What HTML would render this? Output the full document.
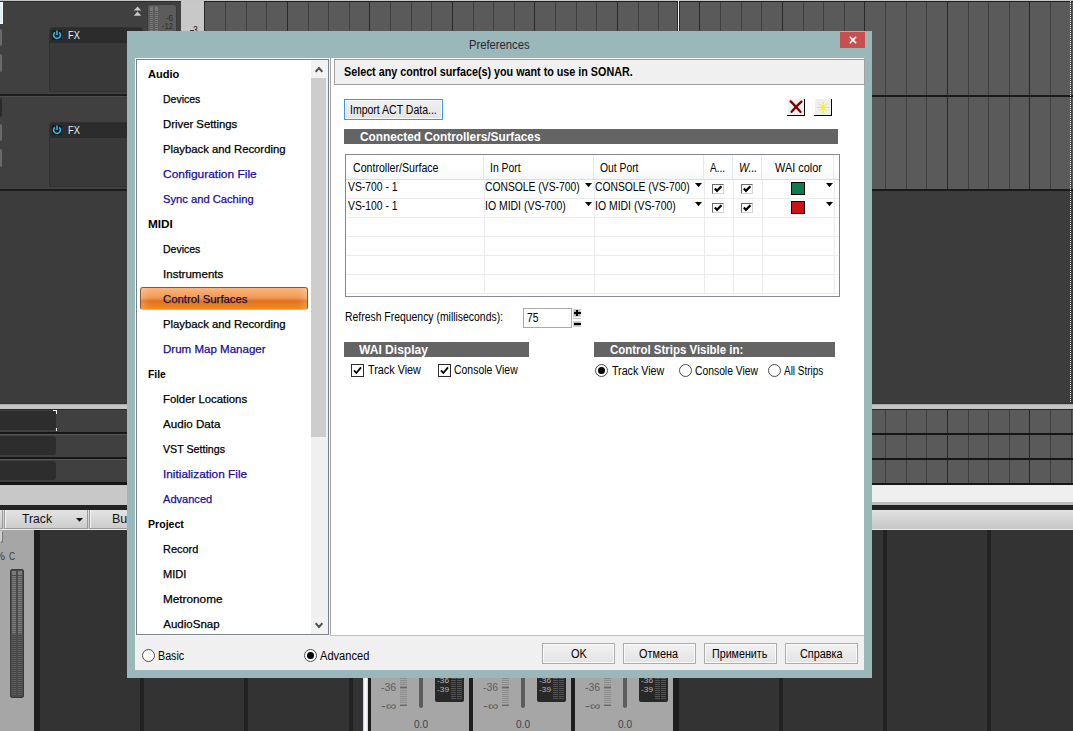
<!DOCTYPE html>
<html lang="en"><head><meta charset="utf-8"><title>Preferences</title>
<style>
html,body{margin:0;padding:0}
body{width:1073px;height:731px;overflow:hidden;background:#3c3c3c;position:relative;font-family:"Liberation Sans",sans-serif;font-size:12px;line-height:12px;color:#000}
.a{position:absolute}
.t{position:absolute;white-space:nowrap;transform-origin:0 0;display:block}

</style></head><body>
<div class="a" style="left:0px;top:0px;width:1073px;height:1px;background:#c6c6c6"></div>
<div class="a" style="left:0px;top:1px;width:181px;height:1px;background:#2c2c2c"></div>
<div class="a" style="left:204px;top:1px;width:869px;height:1px;background:#1e1e1e"></div>
<div class="a" style="left:0px;top:2px;width:181px;height:189px;background:#404040"></div>
<div class="a" style="left:0px;top:94px;width:181px;height:2px;background:#1c1c1c"></div>
<div class="a" style="left:0px;top:96px;width:181px;height:1px;background:#4c4c4c"></div>
<div class="a" style="left:0px;top:189px;width:181px;height:2px;background:#1c1c1c"></div>
<div class="a" style="left:0px;top:2px;width:3px;height:22px;background:#d8f4fa;border:1px solid #fff;border-left:0;box-sizing:border-box"></div>
<div class="a" style="left:0px;top:29px;width:2px;height:17px;background:#6a6a6a;border-radius:0 2px 2px 0"></div>
<div class="a" style="left:0px;top:54px;width:2px;height:18px;background:#6a6a6a;border-radius:0 2px 2px 0"></div>
<div class="a" style="left:0px;top:98px;width:2px;height:19px;background:#2a2a2a;border-radius:0 2px 2px 0"></div>
<div class="a" style="left:0px;top:124px;width:2px;height:17px;background:#6a6a6a;border-radius:0 2px 2px 0"></div>
<div class="a" style="left:0px;top:149px;width:2px;height:18px;background:#6a6a6a;border-radius:0 2px 2px 0"></div>
<div class="a" style="left:50px;top:28px;width:92px;height:63px;background:#393939;border-radius:3px 3px 0 0;box-shadow:0 0 0 1px #313131"></div>
<div class="a" style="left:50px;top:28px;width:92px;height:15px;background:#2c2c2c;border-radius:3px 3px 0 0"></div>
<div class="a" style="left:52px;top:30px;width:10px;height:10px;background:#1c1c1c"></div>
<svg class="a" style="left:52px;top:30px" width="10" height="10" viewBox="0 0 10 10"><path d="M2.9 2.3A3.4 3.4 0 1 0 7.1 2.3" fill="none" stroke="#35b4e8" stroke-width="1.6"/><path d="M5 0.6V5" stroke="#35b4e8" stroke-width="1.6"/></svg>
<span class="t" style="left:67.5px;top:30.3px;font-size:11px;line-height:11px;color:#f0f0f0;transform:scaleX(0.8391);">FX</span>
<div class="a" style="left:50px;top:123px;width:92px;height:63px;background:#393939;border-radius:3px 3px 0 0;box-shadow:0 0 0 1px #313131"></div>
<div class="a" style="left:50px;top:123px;width:92px;height:15px;background:#2c2c2c;border-radius:3px 3px 0 0"></div>
<div class="a" style="left:52px;top:125px;width:10px;height:10px;background:#1c1c1c"></div>
<svg class="a" style="left:52px;top:125px" width="10" height="10" viewBox="0 0 10 10"><path d="M2.9 2.3A3.4 3.4 0 1 0 7.1 2.3" fill="none" stroke="#35b4e8" stroke-width="1.6"/><path d="M5 0.6V5" stroke="#35b4e8" stroke-width="1.6"/></svg>
<span class="t" style="left:67.5px;top:125.3px;font-size:11px;line-height:11px;color:#f0f0f0;transform:scaleX(0.8391);">FX</span>
<svg class="a" style="left:133px;top:6px" width="9" height="11" viewBox="0 0 9 11"><path d="M4.5 0.5L8.2 4.6H0.8Z M4.5 5.6L8.2 9.8H0.8Z" fill="#c8c8c8"/></svg>
<div class="a" style="left:147px;top:4px;width:30px;height:40px;background:#5c5c5c;border-radius:3px;border:1px solid #3a3a3a;box-sizing:border-box"></div>
<div class="a" style="left:150px;top:7px;width:3px;height:4px;background:#787878"></div>
<div class="a" style="left:155px;top:7px;width:3px;height:4px;background:#787878"></div>
<div class="a" style="left:150px;top:12px;width:3px;height:30px;background:repeating-linear-gradient(#7a7a7a 0,#7a7a7a 1px,#5c5c5c 1px,#5c5c5c 2px)"></div>
<div class="a" style="left:155px;top:12px;width:3px;height:30px;background:repeating-linear-gradient(#7a7a7a 0,#7a7a7a 1px,#5c5c5c 1px,#5c5c5c 2px)"></div>
<span class="t" style="left:162.0px;top:30.4px;font-size:9px;line-height:9px;color:#2e2e2e;transform:scaleX(0.8451);">-18</span>
<span class="t" style="left:166.0px;top:14.0px;font-size:9px;line-height:9px;color:#2e2e2e;transform:scaleX(0.8733);">-6</span>
<span class="t" style="left:162.0px;top:21.6px;font-size:9px;line-height:9px;color:#2e2e2e;transform:scaleX(0.8451);">-12</span>
<div class="a" style="left:181px;top:1px;width:23px;height:191px;background:#c8c8c8"></div>
<span class="t" style="left:190.3px;top:25.0px;font-size:11px;line-height:11px;color:#222;transform:scaleX(0.7872);">-3</span>
<div class="a" style="left:190px;top:30px;width:4px;height:1px;background:#3a3a3a"></div>
<svg class="a" style="left:204px;top:2px" width="869" height="93" shape-rendering="crispEdges"><rect width="869" height="93" fill="#5a5a5a"/><rect x="0" y="0" width="1" height="93" fill="#282828"/><rect x="21" y="0" width="1" height="93" fill="#3f3f3f"/><rect x="42" y="0" width="1" height="93" fill="#3f3f3f"/><rect x="62" y="0" width="1" height="93" fill="#3f3f3f"/><rect x="83" y="0" width="1" height="93" fill="#282828"/><rect x="104" y="0" width="1" height="93" fill="#3f3f3f"/><rect x="124" y="0" width="1" height="93" fill="#3f3f3f"/><rect x="145" y="0" width="1" height="93" fill="#3f3f3f"/><rect x="165" y="0" width="1" height="93" fill="#282828"/><rect x="186" y="0" width="1" height="93" fill="#3f3f3f"/><rect x="207" y="0" width="1" height="93" fill="#3f3f3f"/><rect x="227" y="0" width="1" height="93" fill="#3f3f3f"/><rect x="248" y="0" width="1" height="93" fill="#282828"/><rect x="269" y="0" width="1" height="93" fill="#3f3f3f"/><rect x="289" y="0" width="1" height="93" fill="#3f3f3f"/><rect x="310" y="0" width="1" height="93" fill="#3f3f3f"/><rect x="330" y="0" width="1" height="93" fill="#282828"/><rect x="351" y="0" width="1" height="93" fill="#3f3f3f"/><rect x="372" y="0" width="1" height="93" fill="#3f3f3f"/><rect x="392" y="0" width="1" height="93" fill="#3f3f3f"/><rect x="413" y="0" width="1" height="93" fill="#282828"/><rect x="434" y="0" width="1" height="93" fill="#3f3f3f"/><rect x="454" y="0" width="1" height="93" fill="#3f3f3f"/><rect x="475" y="0" width="1" height="93" fill="#3f3f3f"/><rect x="495" y="0" width="1" height="93" fill="#282828"/><rect x="516" y="0" width="1" height="93" fill="#3f3f3f"/><rect x="537" y="0" width="1" height="93" fill="#3f3f3f"/><rect x="557" y="0" width="1" height="93" fill="#3f3f3f"/><rect x="578" y="0" width="1" height="93" fill="#282828"/><rect x="599" y="0" width="1" height="93" fill="#3f3f3f"/><rect x="619" y="0" width="1" height="93" fill="#3f3f3f"/><rect x="640" y="0" width="1" height="93" fill="#3f3f3f"/><rect x="660" y="0" width="1" height="93" fill="#282828"/><rect x="681" y="0" width="1" height="93" fill="#3f3f3f"/><rect x="702" y="0" width="1" height="93" fill="#3f3f3f"/><rect x="722" y="0" width="1" height="93" fill="#3f3f3f"/><rect x="743" y="0" width="1" height="93" fill="#282828"/><rect x="764" y="0" width="1" height="93" fill="#3f3f3f"/><rect x="784" y="0" width="1" height="93" fill="#3f3f3f"/><rect x="805" y="0" width="1" height="93" fill="#3f3f3f"/><rect x="825" y="0" width="1" height="93" fill="#282828"/><rect x="846" y="0" width="1" height="93" fill="#3f3f3f"/><rect x="867" y="0" width="1" height="93" fill="#3f3f3f"/></svg>
<svg class="a" style="left:204px;top:97px" width="869" height="92" shape-rendering="crispEdges"><rect width="869" height="92" fill="#5a5a5a"/><rect x="0" y="0" width="1" height="92" fill="#282828"/><rect x="21" y="0" width="1" height="92" fill="#3f3f3f"/><rect x="42" y="0" width="1" height="92" fill="#3f3f3f"/><rect x="62" y="0" width="1" height="92" fill="#3f3f3f"/><rect x="83" y="0" width="1" height="92" fill="#282828"/><rect x="104" y="0" width="1" height="92" fill="#3f3f3f"/><rect x="124" y="0" width="1" height="92" fill="#3f3f3f"/><rect x="145" y="0" width="1" height="92" fill="#3f3f3f"/><rect x="165" y="0" width="1" height="92" fill="#282828"/><rect x="186" y="0" width="1" height="92" fill="#3f3f3f"/><rect x="207" y="0" width="1" height="92" fill="#3f3f3f"/><rect x="227" y="0" width="1" height="92" fill="#3f3f3f"/><rect x="248" y="0" width="1" height="92" fill="#282828"/><rect x="269" y="0" width="1" height="92" fill="#3f3f3f"/><rect x="289" y="0" width="1" height="92" fill="#3f3f3f"/><rect x="310" y="0" width="1" height="92" fill="#3f3f3f"/><rect x="330" y="0" width="1" height="92" fill="#282828"/><rect x="351" y="0" width="1" height="92" fill="#3f3f3f"/><rect x="372" y="0" width="1" height="92" fill="#3f3f3f"/><rect x="392" y="0" width="1" height="92" fill="#3f3f3f"/><rect x="413" y="0" width="1" height="92" fill="#282828"/><rect x="434" y="0" width="1" height="92" fill="#3f3f3f"/><rect x="454" y="0" width="1" height="92" fill="#3f3f3f"/><rect x="475" y="0" width="1" height="92" fill="#3f3f3f"/><rect x="495" y="0" width="1" height="92" fill="#282828"/><rect x="516" y="0" width="1" height="92" fill="#3f3f3f"/><rect x="537" y="0" width="1" height="92" fill="#3f3f3f"/><rect x="557" y="0" width="1" height="92" fill="#3f3f3f"/><rect x="578" y="0" width="1" height="92" fill="#282828"/><rect x="599" y="0" width="1" height="92" fill="#3f3f3f"/><rect x="619" y="0" width="1" height="92" fill="#3f3f3f"/><rect x="640" y="0" width="1" height="92" fill="#3f3f3f"/><rect x="660" y="0" width="1" height="92" fill="#282828"/><rect x="681" y="0" width="1" height="92" fill="#3f3f3f"/><rect x="702" y="0" width="1" height="92" fill="#3f3f3f"/><rect x="722" y="0" width="1" height="92" fill="#3f3f3f"/><rect x="743" y="0" width="1" height="92" fill="#282828"/><rect x="764" y="0" width="1" height="92" fill="#3f3f3f"/><rect x="784" y="0" width="1" height="92" fill="#3f3f3f"/><rect x="805" y="0" width="1" height="92" fill="#3f3f3f"/><rect x="825" y="0" width="1" height="92" fill="#282828"/><rect x="846" y="0" width="1" height="92" fill="#3f3f3f"/><rect x="867" y="0" width="1" height="92" fill="#3f3f3f"/></svg>
<div class="a" style="left:204px;top:95px;width:869px;height:2px;background:#1a1a1a"></div>
<div class="a" style="left:204px;top:189px;width:869px;height:2px;background:#1a1a1a"></div>
<div class="a" style="left:677px;top:1px;width:3px;height:30px;background:#2a2a2a"></div>
<div class="a" style="left:678px;top:0px;width:1px;height:31px;background:#f4f4f4"></div>
<div class="a" style="left:1070px;top:1px;width:1px;height:401px;background:repeating-linear-gradient(#f0f0f0 0,#f0f0f0 1px,transparent 1px,transparent 2px)"></div>
<div class="a" style="left:0px;top:403px;width:1073px;height:1px;background:#323232"></div>
<div class="a" style="left:0px;top:404px;width:1073px;height:5px;background:linear-gradient(#a8a8a8,#cacaca 45%,#c0c0c0)"></div>
<div class="a" style="left:0px;top:410px;width:181px;height:75px;background:#404040"></div>
<div class="a" style="left:0px;top:411px;width:56px;height:19px;background:#2d2d2d;border-radius:0 3px 3px 0"></div>
<div class="a" style="left:0px;top:436px;width:56px;height:19px;background:#2d2d2d;border-radius:0 3px 3px 0"></div>
<div class="a" style="left:0px;top:461px;width:56px;height:19px;background:#2d2d2d;border-radius:0 3px 3px 0"></div>
<div class="a" style="left:0px;top:432px;width:181px;height:2px;background:#161616"></div>
<div class="a" style="left:0px;top:457px;width:181px;height:2px;background:#161616"></div>
<div class="a" style="left:0px;top:482px;width:181px;height:2px;background:#161616"></div>
<div class="a" style="left:204px;top:433px;width:869px;height:2px;background:#161616"></div>
<div class="a" style="left:204px;top:458px;width:869px;height:2px;background:#161616"></div>
<div class="a" style="left:204px;top:483px;width:869px;height:2px;background:#161616"></div>
<div class="a" style="left:0px;top:434px;width:181px;height:1px;background:#555"></div>
<div class="a" style="left:0px;top:459px;width:181px;height:1px;background:#555"></div>
<div class="a" style="left:0px;top:484px;width:181px;height:1px;background:#161616"></div>
<div class="a" style="left:53px;top:410px;width:4px;height:1px;background:#f0f0f0"></div>
<div class="a" style="left:56px;top:410px;width:1px;height:4px;background:#f0f0f0"></div>
<div class="a" style="left:56px;top:428px;width:1px;height:3px;background:#f0f0f0"></div>
<div class="a" style="left:0px;top:409px;width:1073px;height:1px;background:#2a2a2a"></div>
<svg class="a" style="left:204px;top:410px" width="869" height="23" shape-rendering="crispEdges"><rect width="869" height="23" fill="#5a5a5a"/><rect x="0" y="0" width="1" height="23" fill="#282828"/><rect x="21" y="0" width="1" height="23" fill="#3f3f3f"/><rect x="42" y="0" width="1" height="23" fill="#3f3f3f"/><rect x="62" y="0" width="1" height="23" fill="#3f3f3f"/><rect x="83" y="0" width="1" height="23" fill="#282828"/><rect x="104" y="0" width="1" height="23" fill="#3f3f3f"/><rect x="124" y="0" width="1" height="23" fill="#3f3f3f"/><rect x="145" y="0" width="1" height="23" fill="#3f3f3f"/><rect x="165" y="0" width="1" height="23" fill="#282828"/><rect x="186" y="0" width="1" height="23" fill="#3f3f3f"/><rect x="207" y="0" width="1" height="23" fill="#3f3f3f"/><rect x="227" y="0" width="1" height="23" fill="#3f3f3f"/><rect x="248" y="0" width="1" height="23" fill="#282828"/><rect x="269" y="0" width="1" height="23" fill="#3f3f3f"/><rect x="289" y="0" width="1" height="23" fill="#3f3f3f"/><rect x="310" y="0" width="1" height="23" fill="#3f3f3f"/><rect x="330" y="0" width="1" height="23" fill="#282828"/><rect x="351" y="0" width="1" height="23" fill="#3f3f3f"/><rect x="372" y="0" width="1" height="23" fill="#3f3f3f"/><rect x="392" y="0" width="1" height="23" fill="#3f3f3f"/><rect x="413" y="0" width="1" height="23" fill="#282828"/><rect x="434" y="0" width="1" height="23" fill="#3f3f3f"/><rect x="454" y="0" width="1" height="23" fill="#3f3f3f"/><rect x="475" y="0" width="1" height="23" fill="#3f3f3f"/><rect x="495" y="0" width="1" height="23" fill="#282828"/><rect x="516" y="0" width="1" height="23" fill="#3f3f3f"/><rect x="537" y="0" width="1" height="23" fill="#3f3f3f"/><rect x="557" y="0" width="1" height="23" fill="#3f3f3f"/><rect x="578" y="0" width="1" height="23" fill="#282828"/><rect x="599" y="0" width="1" height="23" fill="#3f3f3f"/><rect x="619" y="0" width="1" height="23" fill="#3f3f3f"/><rect x="640" y="0" width="1" height="23" fill="#3f3f3f"/><rect x="660" y="0" width="1" height="23" fill="#282828"/><rect x="681" y="0" width="1" height="23" fill="#3f3f3f"/><rect x="702" y="0" width="1" height="23" fill="#3f3f3f"/><rect x="722" y="0" width="1" height="23" fill="#3f3f3f"/><rect x="743" y="0" width="1" height="23" fill="#282828"/><rect x="764" y="0" width="1" height="23" fill="#3f3f3f"/><rect x="784" y="0" width="1" height="23" fill="#3f3f3f"/><rect x="805" y="0" width="1" height="23" fill="#3f3f3f"/><rect x="825" y="0" width="1" height="23" fill="#282828"/><rect x="846" y="0" width="1" height="23" fill="#3f3f3f"/><rect x="867" y="0" width="1" height="23" fill="#3f3f3f"/></svg>
<svg class="a" style="left:204px;top:435px" width="869" height="23" shape-rendering="crispEdges"><rect width="869" height="23" fill="#5a5a5a"/><rect x="0" y="0" width="1" height="23" fill="#282828"/><rect x="21" y="0" width="1" height="23" fill="#3f3f3f"/><rect x="42" y="0" width="1" height="23" fill="#3f3f3f"/><rect x="62" y="0" width="1" height="23" fill="#3f3f3f"/><rect x="83" y="0" width="1" height="23" fill="#282828"/><rect x="104" y="0" width="1" height="23" fill="#3f3f3f"/><rect x="124" y="0" width="1" height="23" fill="#3f3f3f"/><rect x="145" y="0" width="1" height="23" fill="#3f3f3f"/><rect x="165" y="0" width="1" height="23" fill="#282828"/><rect x="186" y="0" width="1" height="23" fill="#3f3f3f"/><rect x="207" y="0" width="1" height="23" fill="#3f3f3f"/><rect x="227" y="0" width="1" height="23" fill="#3f3f3f"/><rect x="248" y="0" width="1" height="23" fill="#282828"/><rect x="269" y="0" width="1" height="23" fill="#3f3f3f"/><rect x="289" y="0" width="1" height="23" fill="#3f3f3f"/><rect x="310" y="0" width="1" height="23" fill="#3f3f3f"/><rect x="330" y="0" width="1" height="23" fill="#282828"/><rect x="351" y="0" width="1" height="23" fill="#3f3f3f"/><rect x="372" y="0" width="1" height="23" fill="#3f3f3f"/><rect x="392" y="0" width="1" height="23" fill="#3f3f3f"/><rect x="413" y="0" width="1" height="23" fill="#282828"/><rect x="434" y="0" width="1" height="23" fill="#3f3f3f"/><rect x="454" y="0" width="1" height="23" fill="#3f3f3f"/><rect x="475" y="0" width="1" height="23" fill="#3f3f3f"/><rect x="495" y="0" width="1" height="23" fill="#282828"/><rect x="516" y="0" width="1" height="23" fill="#3f3f3f"/><rect x="537" y="0" width="1" height="23" fill="#3f3f3f"/><rect x="557" y="0" width="1" height="23" fill="#3f3f3f"/><rect x="578" y="0" width="1" height="23" fill="#282828"/><rect x="599" y="0" width="1" height="23" fill="#3f3f3f"/><rect x="619" y="0" width="1" height="23" fill="#3f3f3f"/><rect x="640" y="0" width="1" height="23" fill="#3f3f3f"/><rect x="660" y="0" width="1" height="23" fill="#282828"/><rect x="681" y="0" width="1" height="23" fill="#3f3f3f"/><rect x="702" y="0" width="1" height="23" fill="#3f3f3f"/><rect x="722" y="0" width="1" height="23" fill="#3f3f3f"/><rect x="743" y="0" width="1" height="23" fill="#282828"/><rect x="764" y="0" width="1" height="23" fill="#3f3f3f"/><rect x="784" y="0" width="1" height="23" fill="#3f3f3f"/><rect x="805" y="0" width="1" height="23" fill="#3f3f3f"/><rect x="825" y="0" width="1" height="23" fill="#282828"/><rect x="846" y="0" width="1" height="23" fill="#3f3f3f"/><rect x="867" y="0" width="1" height="23" fill="#3f3f3f"/></svg>
<svg class="a" style="left:204px;top:460px" width="869" height="23" shape-rendering="crispEdges"><rect width="869" height="23" fill="#5a5a5a"/><rect x="0" y="0" width="1" height="23" fill="#282828"/><rect x="21" y="0" width="1" height="23" fill="#3f3f3f"/><rect x="42" y="0" width="1" height="23" fill="#3f3f3f"/><rect x="62" y="0" width="1" height="23" fill="#3f3f3f"/><rect x="83" y="0" width="1" height="23" fill="#282828"/><rect x="104" y="0" width="1" height="23" fill="#3f3f3f"/><rect x="124" y="0" width="1" height="23" fill="#3f3f3f"/><rect x="145" y="0" width="1" height="23" fill="#3f3f3f"/><rect x="165" y="0" width="1" height="23" fill="#282828"/><rect x="186" y="0" width="1" height="23" fill="#3f3f3f"/><rect x="207" y="0" width="1" height="23" fill="#3f3f3f"/><rect x="227" y="0" width="1" height="23" fill="#3f3f3f"/><rect x="248" y="0" width="1" height="23" fill="#282828"/><rect x="269" y="0" width="1" height="23" fill="#3f3f3f"/><rect x="289" y="0" width="1" height="23" fill="#3f3f3f"/><rect x="310" y="0" width="1" height="23" fill="#3f3f3f"/><rect x="330" y="0" width="1" height="23" fill="#282828"/><rect x="351" y="0" width="1" height="23" fill="#3f3f3f"/><rect x="372" y="0" width="1" height="23" fill="#3f3f3f"/><rect x="392" y="0" width="1" height="23" fill="#3f3f3f"/><rect x="413" y="0" width="1" height="23" fill="#282828"/><rect x="434" y="0" width="1" height="23" fill="#3f3f3f"/><rect x="454" y="0" width="1" height="23" fill="#3f3f3f"/><rect x="475" y="0" width="1" height="23" fill="#3f3f3f"/><rect x="495" y="0" width="1" height="23" fill="#282828"/><rect x="516" y="0" width="1" height="23" fill="#3f3f3f"/><rect x="537" y="0" width="1" height="23" fill="#3f3f3f"/><rect x="557" y="0" width="1" height="23" fill="#3f3f3f"/><rect x="578" y="0" width="1" height="23" fill="#282828"/><rect x="599" y="0" width="1" height="23" fill="#3f3f3f"/><rect x="619" y="0" width="1" height="23" fill="#3f3f3f"/><rect x="640" y="0" width="1" height="23" fill="#3f3f3f"/><rect x="660" y="0" width="1" height="23" fill="#282828"/><rect x="681" y="0" width="1" height="23" fill="#3f3f3f"/><rect x="702" y="0" width="1" height="23" fill="#3f3f3f"/><rect x="722" y="0" width="1" height="23" fill="#3f3f3f"/><rect x="743" y="0" width="1" height="23" fill="#282828"/><rect x="764" y="0" width="1" height="23" fill="#3f3f3f"/><rect x="784" y="0" width="1" height="23" fill="#3f3f3f"/><rect x="805" y="0" width="1" height="23" fill="#3f3f3f"/><rect x="825" y="0" width="1" height="23" fill="#282828"/><rect x="846" y="0" width="1" height="23" fill="#3f3f3f"/><rect x="867" y="0" width="1" height="23" fill="#3f3f3f"/></svg>
<div class="a" style="left:0px;top:485px;width:135px;height:20px;background:#c8c8c8"></div>
<div class="a" style="left:135px;top:485px;width:938px;height:17px;background:#efefef"></div>
<div class="a" style="left:135px;top:502px;width:938px;height:3px;background:#bdbdbd"></div>
<div class="a" style="left:0px;top:505px;width:1073px;height:5px;background:#232323"></div>
<div class="a" style="left:0px;top:510px;width:1073px;height:19px;background:linear-gradient(#e2e2e2,#c6c6c6)"></div>
<div class="a" style="left:0px;top:529px;width:1073px;height:1px;background:#ececec"></div>
<div class="a" style="left:0px;top:510px;width:3px;height:19px;border-right:1px solid #999;border-bottom:1px solid #999;box-sizing:border-box"></div>
<div class="a" style="left:4px;top:510px;width:84px;height:19px;border:1px solid #9a9a9a;border-top:0;box-sizing:border-box;background:linear-gradient(#e4e4e4,#cccccc);box-shadow:inset 1px 0 0 #f4f4f4"></div>
<div class="a" style="left:89px;top:510px;width:84px;height:19px;border:1px solid #9a9a9a;border-top:0;box-sizing:border-box;background:linear-gradient(#e4e4e4,#cccccc);box-shadow:inset 1px 0 0 #f4f4f4"></div>
<span class="t" style="left:22.2px;top:513.0px;color:#111;transform:scaleX(1.0148);">Track</span>
<span class="t" style="left:111.5px;top:513.0px;color:#111;transform:scaleX(1.0393);">Bus</span>
<svg class="a" style="left:76px;top:518px" width="7" height="4" viewBox="0 0 7 4"><path d="M0 0H7L3.5 3.8Z" fill="#111"/></svg>
<div class="a" style="left:0px;top:530px;width:1073px;height:201px;background:#333"></div>
<div class="a" style="left:0px;top:530px;width:34px;height:201px;background:#a6a6a6"></div>
<div class="a" style="left:34px;top:530px;width:6px;height:201px;background:#1e1e1e"></div>
<span class="t" style="left:-5.0px;top:550.5px;font-size:11px;line-height:11px;color:#3c3c3c;transform:scaleX(1.0224);">%</span>
<span class="t" style="left:9.4px;top:550.5px;font-size:11px;line-height:11px;color:#3c3c3c;transform:scaleX(0.7544);">C</span>
<div class="a" style="left:0px;top:531px;width:2px;height:11px;background:#cfcfcf;border-radius:0 0 2px 0;box-shadow:1px 1px 0 #777"></div>
<div class="a" style="left:10px;top:569px;width:14px;height:129px;background:#4a4a4a;border-radius:2px;border:1px solid #3a3a3a;box-sizing:border-box"></div>
<div class="a" style="left:12px;top:571px;width:4px;height:4px;background:#7c7c7c"></div>
<div class="a" style="left:18px;top:571px;width:4px;height:4px;background:#7c7c7c"></div>
<div class="a" style="left:12px;top:576px;width:4px;height:58px;background:repeating-linear-gradient(#787878 0,#787878 1px,#5e5e5e 1px,#5e5e5e 2px)"></div>
<div class="a" style="left:12px;top:634px;width:4px;height:61px;background:repeating-linear-gradient(#5e5e5e 0,#5e5e5e 1px,#464646 1px,#464646 2px)"></div>
<div class="a" style="left:18px;top:576px;width:4px;height:58px;background:repeating-linear-gradient(#787878 0,#787878 1px,#5e5e5e 1px,#5e5e5e 2px)"></div>
<div class="a" style="left:18px;top:634px;width:4px;height:61px;background:repeating-linear-gradient(#5e5e5e 0,#5e5e5e 1px,#464646 1px,#464646 2px)"></div>
<div class="a" style="left:140px;top:530px;width:4px;height:201px;background:#222"></div>
<div class="a" style="left:244px;top:530px;width:4px;height:201px;background:#222"></div>
<div class="a" style="left:349px;top:530px;width:4px;height:201px;background:#222"></div>
<div class="a" style="left:779px;top:530px;width:4px;height:201px;background:#222"></div>
<div class="a" style="left:883px;top:530px;width:4px;height:201px;background:#222"></div>
<div class="a" style="left:987px;top:530px;width:4px;height:201px;background:#222"></div>
<div class="a" style="left:363px;top:530px;width:5px;height:201px;background:linear-gradient(90deg,#c8ccd8,#ffffff 45%,#ffffff 60%,#c8ccd8)"></div>
<div class="a" style="left:368px;top:530px;width:3px;height:201px;background:#1c1c1c"></div>
<div class="a" style="left:371px;top:530px;width:98px;height:201px;background:#a6a6a6"></div>
<div class="a" style="left:469px;top:530px;width:4px;height:201px;background:#1e1e1e"></div>
<span class="t" style="left:381.0px;top:683.0px;font-size:10px;line-height:10px;color:#5c5c5c;transform:scaleX(1.0378);">-36</span>
<span class="t" style="left:381.0px;top:699.5px;color:#5c5c5c;transform:scaleX(1.2338);">-∞</span>
<div class="a" style="left:400px;top:678px;width:7px;height:28px;background:repeating-linear-gradient(#8c8c8c 0,#8c8c8c 1px,#a6a6a6 1px,#a6a6a6 2px)"></div>
<div class="a" style="left:400px;top:687px;width:7px;height:1px;background:#686868"></div>
<div class="a" style="left:400px;top:705px;width:7px;height:1px;background:#686868"></div>
<div class="a" style="left:419px;top:670px;width:4px;height:38px;background:#5c5c5c;border-radius:2px"></div>
<div class="a" style="left:435px;top:660px;width:29px;height:42px;background:#282828;border-radius:2px"></div>
<span class="t" style="left:437.0px;top:677.0px;font-size:8px;line-height:8px;color:#b4b4b4;transform:scaleX(1.0378);">-36</span>
<span class="t" style="left:437.0px;top:686.0px;font-size:8px;line-height:8px;color:#b4b4b4;transform:scaleX(1.0378);">-39</span>
<div class="a" style="left:451px;top:664px;width:5px;height:36px;background:repeating-linear-gradient(#545454 0,#545454 1px,#282828 1px,#282828 2px)"></div>
<div class="a" style="left:457px;top:664px;width:5px;height:36px;background:repeating-linear-gradient(#545454 0,#545454 1px,#282828 1px,#282828 2px)"></div>
<span class="t" style="left:414.0px;top:720.0px;font-size:10px;line-height:10px;color:#3e3e48;transform:scaleX(1.0067);">0.0</span>
<div class="a" style="left:473px;top:530px;width:98px;height:201px;background:#a6a6a6"></div>
<div class="a" style="left:571px;top:530px;width:4px;height:201px;background:#1e1e1e"></div>
<span class="t" style="left:483.0px;top:683.0px;font-size:10px;line-height:10px;color:#5c5c5c;transform:scaleX(1.0378);">-36</span>
<span class="t" style="left:483.0px;top:699.5px;color:#5c5c5c;transform:scaleX(1.2338);">-∞</span>
<div class="a" style="left:502px;top:678px;width:7px;height:28px;background:repeating-linear-gradient(#8c8c8c 0,#8c8c8c 1px,#a6a6a6 1px,#a6a6a6 2px)"></div>
<div class="a" style="left:502px;top:687px;width:7px;height:1px;background:#686868"></div>
<div class="a" style="left:502px;top:705px;width:7px;height:1px;background:#686868"></div>
<div class="a" style="left:521px;top:670px;width:4px;height:38px;background:#5c5c5c;border-radius:2px"></div>
<div class="a" style="left:537px;top:660px;width:29px;height:42px;background:#282828;border-radius:2px"></div>
<span class="t" style="left:539.0px;top:677.0px;font-size:8px;line-height:8px;color:#b4b4b4;transform:scaleX(1.0378);">-36</span>
<span class="t" style="left:539.0px;top:686.0px;font-size:8px;line-height:8px;color:#b4b4b4;transform:scaleX(1.0378);">-39</span>
<div class="a" style="left:553px;top:664px;width:5px;height:36px;background:repeating-linear-gradient(#545454 0,#545454 1px,#282828 1px,#282828 2px)"></div>
<div class="a" style="left:559px;top:664px;width:5px;height:36px;background:repeating-linear-gradient(#545454 0,#545454 1px,#282828 1px,#282828 2px)"></div>
<span class="t" style="left:516.0px;top:720.0px;font-size:10px;line-height:10px;color:#3e3e48;transform:scaleX(1.0067);">0.0</span>
<div class="a" style="left:575px;top:530px;width:98px;height:201px;background:#a6a6a6"></div>
<div class="a" style="left:673px;top:530px;width:4px;height:201px;background:#1e1e1e"></div>
<span class="t" style="left:585.0px;top:683.0px;font-size:10px;line-height:10px;color:#5c5c5c;transform:scaleX(1.0378);">-36</span>
<span class="t" style="left:585.0px;top:699.5px;color:#5c5c5c;transform:scaleX(1.2338);">-∞</span>
<div class="a" style="left:604px;top:678px;width:7px;height:28px;background:repeating-linear-gradient(#8c8c8c 0,#8c8c8c 1px,#a6a6a6 1px,#a6a6a6 2px)"></div>
<div class="a" style="left:604px;top:687px;width:7px;height:1px;background:#686868"></div>
<div class="a" style="left:604px;top:705px;width:7px;height:1px;background:#686868"></div>
<div class="a" style="left:623px;top:670px;width:4px;height:38px;background:#5c5c5c;border-radius:2px"></div>
<div class="a" style="left:639px;top:660px;width:29px;height:42px;background:#282828;border-radius:2px"></div>
<span class="t" style="left:641.0px;top:677.0px;font-size:8px;line-height:8px;color:#b4b4b4;transform:scaleX(1.0378);">-36</span>
<span class="t" style="left:641.0px;top:686.0px;font-size:8px;line-height:8px;color:#b4b4b4;transform:scaleX(1.0378);">-39</span>
<div class="a" style="left:655px;top:664px;width:5px;height:36px;background:repeating-linear-gradient(#545454 0,#545454 1px,#282828 1px,#282828 2px)"></div>
<div class="a" style="left:661px;top:664px;width:5px;height:36px;background:repeating-linear-gradient(#545454 0,#545454 1px,#282828 1px,#282828 2px)"></div>
<span class="t" style="left:618.0px;top:720.0px;font-size:10px;line-height:10px;color:#3e3e48;transform:scaleX(1.0067);">0.0</span>
<div class="a" style="left:673px;top:530px;width:6px;height:201px;background:#1e1e1e"></div>
<div class="a" style="left:127px;top:31px;width:745px;height:647px;background:#9ab7ba"></div>
<span class="t" style="left:469.4px;top:38.8px;color:#2a2630;transform:scaleX(0.9366);">Preferences</span>
<div class="a" style="left:840px;top:32px;width:25px;height:16px;background:#c7504f"></div>
<svg class="a" style="left:848.5px;top:36px" width="8" height="8" viewBox="0 0 8 8"><path d="M0.9 0.9L7.1 7.1M7.1 0.9L0.9 7.1" stroke="#fff" stroke-width="1.5"/></svg>
<div class="a" style="left:135px;top:58px;width:729px;height:612px;background:#f0f0f0"></div>
<div class="a" style="left:135px;top:58px;width:195px;height:578px;background:#fff;border:1px solid #f6f6f6;box-sizing:border-box"></div>
<div class="a" style="left:136px;top:59px;width:193px;height:576px;background:#fff;border:1px solid #7c828c;box-sizing:border-box"></div>
<div class="a" style="left:311px;top:60px;width:17px;height:574px;background:#f0f0f0"></div>
<div class="a" style="left:311px;top:60px;width:17px;height:18px;background:#f2f2f2"></div>
<div class="a" style="left:311px;top:617px;width:17px;height:17px;background:#f2f2f2"></div>
<div class="a" style="left:311px;top:78px;width:15px;height:359px;background:#cdcdcd"></div>
<svg class="a" style="left:314.5px;top:66.3px" width="8" height="7" viewBox="0 0 8 7"><path d="M0.6 5.8L4 2L7.4 5.8" fill="none" stroke="#505050" stroke-width="2"/></svg>
<svg class="a" style="left:314.5px;top:621.6px" width="8" height="7" viewBox="0 0 8 7"><path d="M0.6 1.2L4 5L7.4 1.2" fill="none" stroke="#505050" stroke-width="2"/></svg>
<div class="a" style="left:140px;top:287px;width:168px;height:23px;box-sizing:border-box;border:1px solid #8c5a1e;border-bottom-color:#ffb43c;border-radius:3px;background:linear-gradient(#fbb57a 0,#f09a58 45%,#e4701e 62%,#f58a1c 100%)"></div>
<div class="a" style="left:141px;top:288px;width:9px;height:21px;background:linear-gradient(90deg,rgba(255,255,255,.18),rgba(255,255,255,0))"></div>
<div class="a" style="left:298px;top:288px;width:9px;height:21px;background:linear-gradient(270deg,rgba(255,255,255,.18),rgba(255,255,255,0))"></div>
<span class="t" style="left:148.3px;top:69.0px;font-size:11.5px;line-height:11.5px;font-weight:bold;transform:scaleX(0.9638);">Audio</span>
<span class="t" style="left:163.3px;top:94.0px;font-size:11.5px;line-height:11.5px;transform:scaleX(0.9118);-webkit-text-stroke:.25px;">Devices</span>
<span class="t" style="left:163.3px;top:119.0px;font-size:11.5px;line-height:11.5px;transform:scaleX(0.9851);-webkit-text-stroke:.25px;">Driver Settings</span>
<span class="t" style="left:163.3px;top:144.0px;font-size:11.5px;line-height:11.5px;transform:scaleX(0.9826);-webkit-text-stroke:.25px;">Playback and Recording</span>
<span class="t" style="left:163.3px;top:169.0px;font-size:11.5px;line-height:11.5px;color:#1a0c96;transform:scaleX(1.0395);-webkit-text-stroke:.25px;">Configuration File</span>
<span class="t" style="left:163.3px;top:194.0px;font-size:11.5px;line-height:11.5px;color:#1a0c96;transform:scaleX(0.9717);-webkit-text-stroke:.25px;">Sync and Caching</span>
<span class="t" style="left:148.3px;top:219.0px;font-size:11.5px;line-height:11.5px;font-weight:bold;transform:scaleX(1.0255);">MIDI</span>
<span class="t" style="left:163.3px;top:244.0px;font-size:11.5px;line-height:11.5px;transform:scaleX(0.9118);-webkit-text-stroke:.25px;">Devices</span>
<span class="t" style="left:163.3px;top:269.0px;font-size:11.5px;line-height:11.5px;transform:scaleX(1.0037);-webkit-text-stroke:.25px;">Instruments</span>
<span class="t" style="left:163.3px;top:294.0px;font-size:11.5px;line-height:11.5px;color:#101050;transform:scaleX(0.9865);-webkit-text-stroke:.25px;">Control Surfaces</span>
<span class="t" style="left:163.3px;top:319.0px;font-size:11.5px;line-height:11.5px;transform:scaleX(0.9826);-webkit-text-stroke:.25px;">Playback and Recording</span>
<span class="t" style="left:163.3px;top:344.0px;font-size:11.5px;line-height:11.5px;color:#1a0c96;transform:scaleX(1.0033);-webkit-text-stroke:.25px;">Drum Map Manager</span>
<span class="t" style="left:148.3px;top:369.0px;font-size:11.5px;line-height:11.5px;font-weight:bold;transform:scaleX(0.9035);">File</span>
<span class="t" style="left:163.3px;top:394.0px;font-size:11.5px;line-height:11.5px;transform:scaleX(0.9890);-webkit-text-stroke:.25px;">Folder Locations</span>
<span class="t" style="left:163.3px;top:419.0px;font-size:11.5px;line-height:11.5px;transform:scaleX(1.0087);-webkit-text-stroke:.25px;">Audio Data</span>
<span class="t" style="left:163.3px;top:444.0px;font-size:11.5px;line-height:11.5px;transform:scaleX(0.9267);-webkit-text-stroke:.25px;">VST Settings</span>
<span class="t" style="left:163.3px;top:469.0px;font-size:11.5px;line-height:11.5px;color:#1a0c96;transform:scaleX(1.0278);-webkit-text-stroke:.25px;">Initialization File</span>
<span class="t" style="left:163.3px;top:494.0px;font-size:11.5px;line-height:11.5px;color:#1a0c96;transform:scaleX(0.9618);-webkit-text-stroke:.25px;">Advanced</span>
<span class="t" style="left:148.3px;top:519.0px;font-size:11.5px;line-height:11.5px;font-weight:bold;transform:scaleX(0.9205);">Project</span>
<span class="t" style="left:163.3px;top:544.0px;font-size:11.5px;line-height:11.5px;transform:scaleX(0.9520);-webkit-text-stroke:.25px;">Record</span>
<span class="t" style="left:163.3px;top:569.0px;font-size:11.5px;line-height:11.5px;transform:scaleX(0.9637);-webkit-text-stroke:.25px;">MIDI</span>
<span class="t" style="left:163.3px;top:594.0px;font-size:11.5px;line-height:11.5px;transform:scaleX(1.0228);-webkit-text-stroke:.25px;">Metronome</span>
<span class="t" style="left:163.3px;top:619.0px;font-size:11.5px;line-height:11.5px;-webkit-text-stroke:.25px;">AudioSnap</span>
<div class="a" style="left:330px;top:58px;width:534px;height:578px;background:#fff;border-left:1px solid #a5a5a5;border-bottom:1px solid #c0c0c0;box-sizing:border-box"></div>
<div class="a" style="left:334px;top:59px;width:531px;height:26px;background:#f0f0f0;border:1px solid #a0a0a0;box-sizing:border-box"></div>
<span class="t" style="left:343.8px;top:66.2px;font-weight:bold;transform:scaleX(0.8964);">Select any control surface(s) you want to use in SONAR.</span>
<div class="a" style="left:344px;top:99px;width:99px;height:21px;box-sizing:border-box;border:1px solid #3c96ee;background:linear-gradient(#f0f0f0,#e4e4e4);box-shadow:inset 0 0 0 1px #f8fbff"></div>
<span class="t" style="left:349.6px;top:104.0px;transform:scaleX(0.8754);">Import ACT Data...</span>
<div class="a" style="left:788px;top:99px;width:16px;height:16px;background:#efefef"></div>
<div class="a" style="left:804px;top:99px;width:1px;height:17px;background:#000"></div>
<div class="a" style="left:787px;top:115px;width:18px;height:1px;background:#000"></div>
<div class="a" style="left:815px;top:99px;width:16px;height:16px;background:#efefef"></div>
<div class="a" style="left:831px;top:99px;width:1px;height:17px;background:#000"></div>
<div class="a" style="left:814px;top:115px;width:18px;height:1px;background:#000"></div>
<svg class="a" style="left:788px;top:99px" width="16" height="16" viewBox="0 0 16 16"><path d="M2.6 2.4C5 4.6 9.5 9.6 12.6 13M13.4 2.6C10 5.6 6.4 9.6 3.6 12.8" stroke="#7b0000" stroke-width="2.3" stroke-linecap="round" fill="none"/></svg>
<svg class="a" style="left:815px;top:99px" width="16" height="16" viewBox="0 0 16 16"><path d="M8 3V14M2 8.5H14" stroke="#f8f400" stroke-width="1.1" fill="none"/><path d="M4 4.5L6.5 7M12 4.5L9.5 7M4.5 12L6.5 10M11.5 12L9.5 10" stroke="#f0ec10" stroke-width="1" fill="none"/><rect x="6.5" y="7" width="3" height="3" fill="#fff700"/></svg>
<div class="a" style="left:344px;top:129px;width:494px;height:15px;background:#646464"></div>
<span class="t" style="left:359.5px;top:131.0px;font-weight:bold;color:#fff;transform:scaleX(0.9843);">Connected Controllers/Surfaces</span>
<div class="a" style="left:344px;top:342px;width:185px;height:15px;background:#646464"></div>
<span class="t" style="left:359.0px;top:344.0px;font-weight:bold;color:#fff;transform:scaleX(1.0045);">WAI Display</span>
<div class="a" style="left:594px;top:342px;width:241px;height:15px;background:#646464"></div>
<span class="t" style="left:609.5px;top:344.0px;font-weight:bold;color:#fff;transform:scaleX(0.9535);">Control Strips Visible in:</span>
<div class="a" style="left:345px;top:154px;width:495px;height:143px;box-sizing:border-box;border:1px solid #828790;background:#fff"></div>
<div class="a" style="left:346px;top:155px;width:493px;height:24px;background:linear-gradient(#fff,#fff 50%,#f7f8fa)"></div>
<div class="a" style="left:346px;top:179px;width:493px;height:1px;background:#d5dfe9"></div>
<div class="a" style="left:346px;top:198px;width:492px;height:1px;background:#ececec"></div>
<div class="a" style="left:346px;top:217px;width:492px;height:1px;background:#ececec"></div>
<div class="a" style="left:346px;top:236px;width:492px;height:1px;background:#ececec"></div>
<div class="a" style="left:346px;top:255px;width:492px;height:1px;background:#ececec"></div>
<div class="a" style="left:346px;top:274px;width:492px;height:1px;background:#ececec"></div>
<div class="a" style="left:346px;top:293px;width:492px;height:1px;background:#ececec"></div>
<div class="a" style="left:483px;top:155px;width:1px;height:24px;background:#e3eaf3"></div>
<div class="a" style="left:484px;top:180px;width:1px;height:114px;background:#ececec"></div>
<div class="a" style="left:593px;top:155px;width:1px;height:24px;background:#e3eaf3"></div>
<div class="a" style="left:594px;top:180px;width:1px;height:114px;background:#ececec"></div>
<div class="a" style="left:703px;top:155px;width:1px;height:24px;background:#e3eaf3"></div>
<div class="a" style="left:704px;top:180px;width:1px;height:114px;background:#ececec"></div>
<div class="a" style="left:732px;top:155px;width:1px;height:24px;background:#e3eaf3"></div>
<div class="a" style="left:733px;top:180px;width:1px;height:114px;background:#ececec"></div>
<div class="a" style="left:761px;top:155px;width:1px;height:24px;background:#e3eaf3"></div>
<div class="a" style="left:762px;top:180px;width:1px;height:114px;background:#ececec"></div>
<div class="a" style="left:833px;top:155px;width:1px;height:24px;background:#e3eaf3"></div>
<div class="a" style="left:834px;top:180px;width:1px;height:114px;background:#ececec"></div>
<span class="t" style="left:352.5px;top:162.0px;transform:scaleX(0.8840);">Controller/Surface</span>
<span class="t" style="left:490.0px;top:162.0px;transform:scaleX(0.8654);">In Port</span>
<span class="t" style="left:599.5px;top:162.0px;transform:scaleX(0.8615);">Out Port</span>
<span class="t" style="left:710.0px;top:162.0px;transform:scaleX(0.8326);">A...</span>
<span class="t" style="left:739.0px;top:162.0px;transform:scaleX(0.8707);font-style:italic;">W...</span>
<span class="t" style="left:775.0px;top:162.0px;transform:scaleX(0.9115);">WAI color</span>
<span class="t" style="left:348.0px;top:181.0px;transform:scaleX(0.8627);">VS-700 - 1</span>
<span class="t" style="left:348.0px;top:200.0px;transform:scaleX(0.8627);">VS-100 - 1</span>
<span class="t" style="left:485.0px;top:181.0px;transform:scaleX(0.8605);">CONSOLE (VS-700)</span>
<span class="t" style="left:595.0px;top:181.0px;transform:scaleX(0.8605);">CONSOLE (VS-700)</span>
<span class="t" style="left:485.0px;top:200.0px;transform:scaleX(0.8717);">IO MIDI (VS-700)</span>
<span class="t" style="left:595.0px;top:200.0px;transform:scaleX(0.8717);">IO MIDI (VS-700)</span>
<svg class="a" style="left:585px;top:183px" width="7" height="4.4" viewBox="0 0 7 4.4"><path d="M0 0H7L3.5 4.2Z" fill="#000"/></svg>
<svg class="a" style="left:695px;top:183px" width="7" height="4.4" viewBox="0 0 7 4.4"><path d="M0 0H7L3.5 4.2Z" fill="#000"/></svg>
<svg class="a" style="left:826px;top:183px" width="7" height="4.4" viewBox="0 0 7 4.4"><path d="M0 0H7L3.5 4.2Z" fill="#000"/></svg>
<div class="a" style="left:712px;top:184px;width:12px;height:10px;box-sizing:border-box;background:#fff;border:1px solid #6a6a6a;border-right-color:#d4d4d4;border-bottom-color:#d4d4d4"></div>
<svg class="a" style="left:714px;top:185px" width="8" height="8" viewBox="0 0 8 8"><path d="M0.8 3.4L3 5.8L7.4 1.2" fill="none" stroke="#000" stroke-width="2.2"/></svg>
<div class="a" style="left:741px;top:184px;width:12px;height:10px;box-sizing:border-box;background:#fff;border:1px solid #6a6a6a;border-right-color:#d4d4d4;border-bottom-color:#d4d4d4"></div>
<svg class="a" style="left:743px;top:185px" width="8" height="8" viewBox="0 0 8 8"><path d="M0.8 3.4L3 5.8L7.4 1.2" fill="none" stroke="#000" stroke-width="2.2"/></svg>
<svg class="a" style="left:585px;top:202px" width="7" height="4.4" viewBox="0 0 7 4.4"><path d="M0 0H7L3.5 4.2Z" fill="#000"/></svg>
<svg class="a" style="left:695px;top:202px" width="7" height="4.4" viewBox="0 0 7 4.4"><path d="M0 0H7L3.5 4.2Z" fill="#000"/></svg>
<svg class="a" style="left:826px;top:202px" width="7" height="4.4" viewBox="0 0 7 4.4"><path d="M0 0H7L3.5 4.2Z" fill="#000"/></svg>
<div class="a" style="left:712px;top:203px;width:12px;height:10px;box-sizing:border-box;background:#fff;border:1px solid #6a6a6a;border-right-color:#d4d4d4;border-bottom-color:#d4d4d4"></div>
<svg class="a" style="left:714px;top:204px" width="8" height="8" viewBox="0 0 8 8"><path d="M0.8 3.4L3 5.8L7.4 1.2" fill="none" stroke="#000" stroke-width="2.2"/></svg>
<div class="a" style="left:741px;top:203px;width:12px;height:10px;box-sizing:border-box;background:#fff;border:1px solid #6a6a6a;border-right-color:#d4d4d4;border-bottom-color:#d4d4d4"></div>
<svg class="a" style="left:743px;top:204px" width="8" height="8" viewBox="0 0 8 8"><path d="M0.8 3.4L3 5.8L7.4 1.2" fill="none" stroke="#000" stroke-width="2.2"/></svg>
<div class="a" style="left:791px;top:182px;width:14px;height:13px;box-sizing:border-box;background:#0d7b50;border:1px solid #000"></div>
<div class="a" style="left:791px;top:201px;width:14px;height:13px;box-sizing:border-box;background:#cc1414;border:1px solid #000"></div>
<span class="t" style="left:345.0px;top:311.2px;transform:scaleX(0.8678);">Refresh Frequency (milliseconds):</span>
<div class="a" style="left:523px;top:308px;width:49px;height:20px;box-sizing:border-box;border:1px solid #a8a8a8;background:#fff"></div>
<span class="t" style="left:527.0px;top:312.0px;transform:scaleX(0.8608);">75</span>
<div class="a" style="left:573px;top:309px;width:8px;height:8px;background:#b6b6b6;border:1px solid #d2d2d2;box-sizing:border-box"></div>
<div class="a" style="left:574px;top:312px;width:7px;height:2px;background:#000"></div>
<div class="a" style="left:576px;top:310px;width:2px;height:6px;background:#000"></div>
<div class="a" style="left:573px;top:318px;width:8px;height:1px;background:#c6c6c6"></div>
<div class="a" style="left:573px;top:321px;width:8px;height:6px;background:#b6b6b6;border:1px solid #d2d2d2;box-sizing:border-box"></div>
<div class="a" style="left:574px;top:323px;width:7px;height:2px;background:#000"></div>
<div class="a" style="left:351px;top:364px;width:13px;height:13px;box-sizing:border-box;border:1px solid #2c2c2c;background:#fff"></div>
<svg class="a" style="left:353px;top:366px" width="9" height="9" viewBox="0 0 9 9"><path d="M1 4.4L3.4 7L8 1.4" fill="none" stroke="#000" stroke-width="1.8"/></svg>
<span class="t" style="left:367.5px;top:364.3px;transform:scaleX(0.9014);">Track View</span>
<div class="a" style="left:438px;top:364px;width:13px;height:13px;box-sizing:border-box;border:1px solid #2c2c2c;background:#fff"></div>
<svg class="a" style="left:440px;top:366px" width="9" height="9" viewBox="0 0 9 9"><path d="M1 4.4L3.4 7L8 1.4" fill="none" stroke="#000" stroke-width="1.8"/></svg>
<span class="t" style="left:453.6px;top:364.3px;transform:scaleX(0.8707);">Console View</span>
<div class="a" style="left:595px;top:364px;width:13px;height:13px;box-sizing:border-box;border:1px solid #4c4c4c;background:#fff;border-radius:50%"></div>
<div class="a" style="left:598px;top:367px;width:7px;height:7px;background:#000;border-radius:50%"></div>
<span class="t" style="left:612.0px;top:365.0px;transform:scaleX(0.8895);">Track View</span>
<div class="a" style="left:679px;top:364px;width:13px;height:13px;box-sizing:border-box;border:1px solid #4c4c4c;background:#fff;border-radius:50%"></div>
<span class="t" style="left:695.0px;top:365.0px;transform:scaleX(0.8612);">Console View</span>
<div class="a" style="left:768px;top:364px;width:13px;height:13px;box-sizing:border-box;border:1px solid #4c4c4c;background:#fff;border-radius:50%"></div>
<span class="t" style="left:784.3px;top:365.0px;transform:scaleX(0.8280);">All Strips</span>
<div class="a" style="left:142px;top:649px;width:13px;height:13px;box-sizing:border-box;border:1px solid #4c4c4c;background:#fff;border-radius:50%"></div>
<span class="t" style="left:158.2px;top:650.0px;transform:scaleX(0.8929);">Basic</span>
<div class="a" style="left:304px;top:649px;width:13px;height:13px;box-sizing:border-box;border:1px solid #4c4c4c;background:#fff;border-radius:50%"></div>
<div class="a" style="left:307px;top:652px;width:7px;height:7px;background:#000;border-radius:50%"></div>
<span class="t" style="left:320.0px;top:650.0px;transform:scaleX(0.9237);">Advanced</span>
<div class="a" style="left:542px;top:643px;width:73px;height:21px;box-sizing:border-box;border:1px solid #acacac;background:linear-gradient(#f2f2f2,#e3e3e3);box-shadow:inset 0 0 0 1px #fafafa"></div>
<span class="t" style="left:570.5px;top:647.8px;transform:scaleX(0.9168);">OK</span>
<div class="a" style="left:623px;top:643px;width:73px;height:21px;box-sizing:border-box;border:1px solid #acacac;background:linear-gradient(#f2f2f2,#e3e3e3);box-shadow:inset 0 0 0 1px #fafafa"></div>
<span class="t" style="left:639.0px;top:647.8px;transform:scaleX(0.9057);">Отмена</span>
<div class="a" style="left:704px;top:643px;width:73px;height:21px;box-sizing:border-box;border:1px solid #acacac;background:linear-gradient(#f2f2f2,#e3e3e3);box-shadow:inset 0 0 0 1px #fafafa"></div>
<span class="t" style="left:712.0px;top:647.8px;transform:scaleX(0.8917);">Применить</span>
<div class="a" style="left:785px;top:643px;width:73px;height:21px;box-sizing:border-box;border:1px solid #acacac;background:linear-gradient(#f2f2f2,#e3e3e3);box-shadow:inset 0 0 0 1px #fafafa"></div>
<span class="t" style="left:799.7px;top:647.8px;transform:scaleX(0.9049);">Справка</span>
</body></html>
